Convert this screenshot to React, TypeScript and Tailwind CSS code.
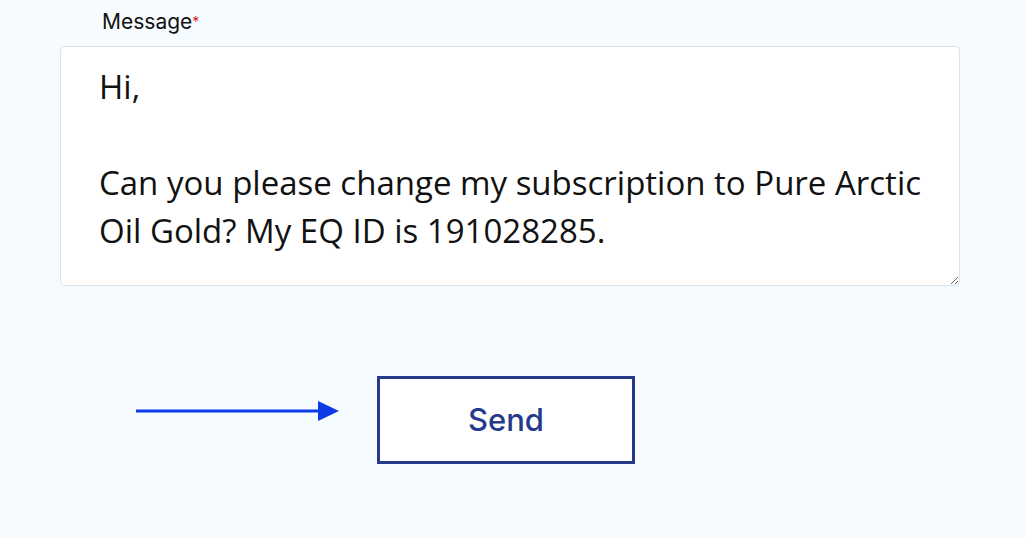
import React from 'react';

const message = `Hi,

Can you please change my subscription to Pure Arctic Oil Gold? My EQ ID is 191028285.`;

export default function App() {
    return (
        <div className="w-[1026px] h-[538px] bg-[#f5fbfe] overflow-hidden flex flex-col">
            <div className="pl-[60px] pr-[66px] pt-[8px] flex flex-col">
                <label className="pl-[42px] h-[38px] text-[21px] leading-[28px] text-[#111] font-['Inter',sans-serif]">
                    Message<span className="text-[#d6262b] text-[14px] align-top">*</span>
                </label>
                <textarea
                    defaultValue={message}
                    className="w-[900px] h-[240px] bg-white border border-[#dfe3e6] rounded-[5px] pl-[38px] pr-[30px] pt-[16px] text-[33px] leading-[48px] text-[#111] font-['Open_Sans',sans-serif] outline-none resize-y"
                />
            </div>
            <div className="flex items-start mt-[90px] pl-[136px]">
                <svg width="204" height="22" viewBox="0 0 204 22" className="shrink-0 mt-[24px]">
                    <line x1="0" y1="11" x2="186" y2="11" stroke="#0b3ae6" strokeWidth="3" />
                    <polygon points="182,1 203,11 182,21" fill="#0b3ae6" />
                </svg>
                <button className="ml-[37px] w-[258px] h-[88px] border-[3px] border-[#263a8c] bg-white text-[#263a8c] text-[31px] font-medium font-['Inter',sans-serif] flex items-center justify-center">
                    Send
                </button>
            </div>
        </div>
    );
}
